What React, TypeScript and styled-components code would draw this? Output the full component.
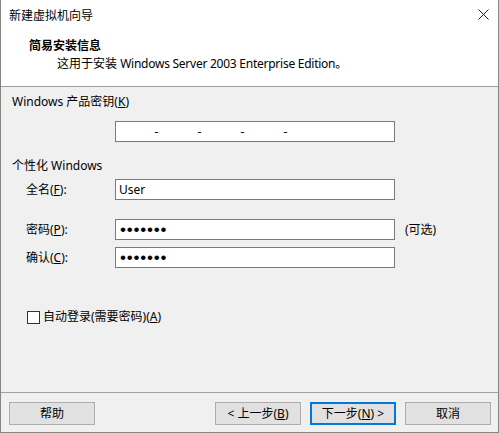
import { FC } from 'react';
import styled, { createGlobalStyle } from 'styled-components';

const GlobalStyle = createGlobalStyle`
	html, body {
		margin: 0;
		padding: 0;
		background: #ffffff;
	}
	body {
		font-family: 'Noto Sans', 'Noto Sans CJK SC', sans-serif;
		font-size: 12px;
		color: #000000;
	}
`;

const CloseIcon: FC = () => (
	<svg width="11" height="11" viewBox="0 0 11 11">
		<path d="M0.5 0.5 L10.5 10.5 M10.5 0.5 L0.5 10.5" stroke="#1a1a1a" strokeWidth="1" fill="none" />
	</svg>
);

const App: FC = () => {
	return (
		<>
			<GlobalStyle />
			<Window>
				<TitleBar>
					<TitleText>新建虚拟机向导</TitleText>
					<CloseButton>
						<CloseIcon />
					</CloseButton>
				</TitleBar>
				<Header>
					<HeaderTitle>简易安装信息</HeaderTitle>
					<HeaderCopy>
						这用于安装 <Latin>Windows Server 2003 Enterprise Edition</Latin>。
					</HeaderCopy>
				</Header>
				<Body>
					<SectionLabel>
						Windows 产品密钥(<u>K</u>)
					</SectionLabel>
					<KeyBox>
						{[0, 1, 2, 3, 4].map((i) => (
							<KeyPart key={i}>
								<KeySegment />
								{i < 4 && <KeyDash>-</KeyDash>}
							</KeyPart>
						))}
					</KeyBox>
					<SectionLabel $top={16}>个性化 Windows</SectionLabel>
					<FieldRow $top={5}>
						<FieldLabel>
							全名(<u>F</u>):
						</FieldLabel>
						<TextInput type="text" value="User" readOnly />
					</FieldRow>
					<FieldRow $top={19}>
						<FieldLabel>
							密码(<u>P</u>):
						</FieldLabel>
						<PasswordInput type="password" value="1234567" readOnly />
						<FieldHint>(可选)</FieldHint>
					</FieldRow>
					<FieldRow $top={7}>
						<FieldLabel>
							确认(<u>C</u>):
						</FieldLabel>
						<PasswordInput type="password" value="1234567" readOnly />
					</FieldRow>
					<CheckRow>
						<CheckBox />
						<CheckLabel>
							自动登录(需要密码)(<u>A</u>)
						</CheckLabel>
					</CheckRow>
				</Body>
				<Footer>
					<Button>帮助</Button>
					<ButtonGroup>
						<Button>
							&lt; 上一步(<u>B</u>)
						</Button>
						<Button $primary>
							下一步(<u>N</u>) &gt;
						</Button>
						<Button>取消</Button>
					</ButtonGroup>
				</Footer>
			</Window>
		</>
	);
};

const Window = styled.div`
	width: 499px;
	height: 433px;
	box-sizing: border-box;
	border: 1px solid #858585;
	border-top: none;
	display: flex;
	flex-direction: column;
	background: #ffffff;
`;

const TitleBar = styled.div`
	height: 30px;
	display: flex;
	align-items: center;
	justify-content: space-between;
	padding: 0 9px 0 8px;
	background: #ffffff;
`;

const TitleText = styled.div`
	font-size: 12px;
	line-height: 16px;
	padding-top: 1px;
`;

const CloseButton = styled.div`
	display: flex;
	align-items: center;
	margin-top: -1px;
`;

const Header = styled.div`
	height: 57px;
	padding: 8px 0 0 28px;
	box-sizing: border-box;
	border-bottom: 1px solid #a0a0a0;
	background: #ffffff;
`;

const HeaderTitle = styled.div`
	font-weight: bold;
	line-height: 16px;
`;

const HeaderCopy = styled.div`
	line-height: 16px;
	margin-top: 2px;
	padding-left: 28px;
`;

const Latin = styled.span`
	letter-spacing: -0.25px;
`;

const Body = styled.div`
	flex: 1;
	background: #f0f0f0;
	padding: 7px 0 0 11px;
`;

const SectionLabel = styled.div<{ $top?: number }>`
	line-height: 16px;
	margin-top: ${(props) => props.$top ?? 0}px;
`;

const KeyBox = styled.div`
	width: 280px;
	height: 21px;
	box-sizing: border-box;
	margin: 11px 0 0 103px;
	border: 1px solid #7a7a7a;
	background: #ffffff;
	display: flex;
	align-items: center;
`;

const KeyPart = styled.div`
	display: flex;
	align-items: center;
`;

const KeySegment = styled.div`
	width: 38px;
`;

const KeyDash = styled.div`
	width: 5px;
	text-align: center;
	line-height: 16px;
`;

const FieldRow = styled.div<{ $top: number }>`
	display: grid;
	grid-template-columns: 103px 280px auto;
	align-items: center;
	height: 21px;
	margin-top: ${(props) => props.$top}px;
`;

const FieldLabel = styled.div`
	padding-left: 14px;
	line-height: 16px;
`;

const TextInput = styled.input`
	width: 280px;
	height: 21px;
	box-sizing: border-box;
	margin: 0;
	padding: 0 3px;
	border: 1px solid #7a7a7a;
	border-radius: 0;
	background: #ffffff;
	font-family: 'Noto Sans', 'Noto Sans CJK SC', sans-serif;
	font-size: 12px;
	color: #000000;
	outline: none;
`;

const PasswordInput = styled(TextInput)`
	font-family: 'Liberation Sans', sans-serif;
	font-size: 17px;
	letter-spacing: 0.8px;
	padding-left: 4px;
`;

const FieldHint = styled.div`
	padding-left: 10px;
	line-height: 16px;
`;

const CheckRow = styled.div`
	display: flex;
	align-items: center;
	height: 16px;
	margin: 41px 0 0 15px;
`;

const CheckBox = styled.div`
	width: 13px;
	height: 13px;
	box-sizing: border-box;
	border: 1px solid #333333;
	background: #ffffff;
`;

const CheckLabel = styled.div`
	margin-left: 3px;
	line-height: 16px;
`;

const Footer = styled.div`
	height: 40px;
	box-sizing: border-box;
	border-top: 1px solid #a0a0a0;
	background: #f0f0f0;
	display: flex;
	justify-content: space-between;
	align-items: flex-start;
	padding: 9px 7px 0 8px;
`;

const ButtonGroup = styled.div`
	display: flex;
	gap: 9px;
`;

const Button = styled.div<{ $primary?: boolean }>`
	width: 86px;
	height: 23px;
	box-sizing: border-box;
	border: ${(props) => (props.$primary ? '2px solid #0078d7' : '1px solid #adadad')};
	background: #e1e1e1;
	display: flex;
	align-items: center;
	justify-content: center;
	line-height: 16px;
	font-size: 12px;
`;

export default App;
